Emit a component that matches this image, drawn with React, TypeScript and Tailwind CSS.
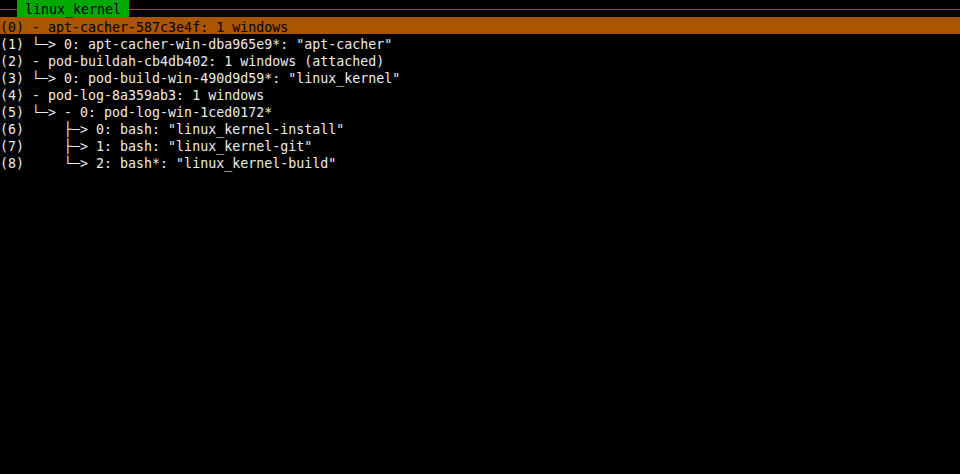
import React from 'react';

const rows: string[] = [
  '(0) - apt-cacher-587c3e4f: 1 windows',
  '(1) └─> 0: apt-cacher-win-dba965e9*: "apt-cacher"',
  '(2) - pod-buildah-cb4db402: 1 windows (attached)',
  '(3) └─> 0: pod-build-win-490d9d59*: "linux_kernel"',
  '(4) - pod-log-8a359ab3: 1 windows',
  '(5) └─> - 0: pod-log-win-1ced0172*',
  '(6)     ├─> 0: bash: "linux_kernel-install"',
  '(7)     ├─> 1: bash: "linux_kernel-git"',
  '(8)     └─> 2: bash*: "linux_kernel-build"',
];

const App: React.FC = () => {
  return (
    <div
      className="w-[960px] h-[474px] bg-black text-[#ececec] text-[13.3px] overflow-hidden"
      style={{ fontFamily: '"DejaVu Sans Mono", "Liberation Mono", monospace' }}
    >
      {/* title bar */}
      <div className="flex items-start h-[17px]">
        <div className="w-[17px] h-px mt-[9px] bg-[#aa5500]" />
        <div className="h-[17px] px-[8px] bg-[#00a800] text-black leading-[20px] whitespace-pre">linux_kernel</div>
        <div className="flex-1 h-px mt-[9px] bg-[#aa5500]" />
      </div>

      {/* tree */}
      <div>
        {rows.map((r, i) => (
          <div
            key={i}
            className={
              i === 0
                ? 'h-[17px] leading-[21px] bg-[#aa5500] text-black whitespace-pre'
                : 'h-[17px] leading-[21px] whitespace-pre'
            }
          >
            {r}
          </div>
        ))}
      </div>
    </div>
  );
};

export default App;
